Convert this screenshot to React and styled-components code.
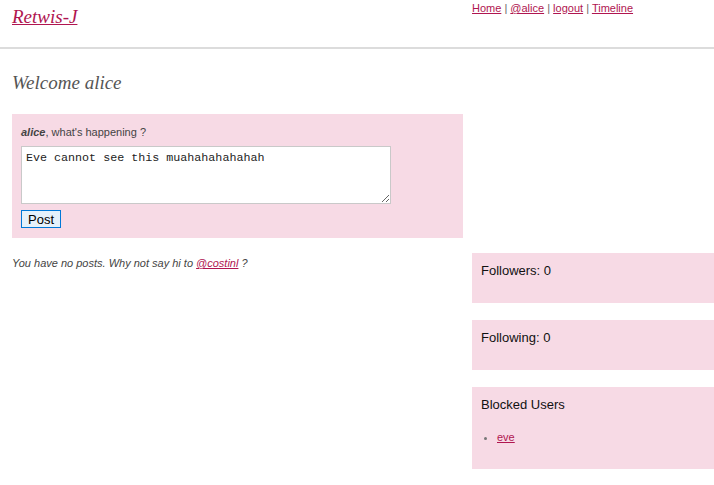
import styled, { createGlobalStyle } from "styled-components";

const GlobalStyle = createGlobalStyle`
  body {
    margin: 0;
    background: #fff;
    font-family: "Liberation Sans", Arial, sans-serif;
    color: #333;
  }
`;

const Header = styled.header`
  display: flex;
  justify-content: space-between;
  height: 47px;
  border-bottom: 2px solid #dcdcdc;
  padding: 0 12px;
`;

const Logo = styled.a`
  font-family: "Liberation Serif", "Times New Roman", serif;
  font-style: italic;
  font-size: 19px;
  color: #b01550;
  text-decoration: underline;
  margin-top: 5px;
  line-height: 24px;
`;

const Nav = styled.nav`
  width: 230px;
  font-size: 11px;
  line-height: 14px;
  color: #666;
  padding-top: 1px;
`;

const NavLink = styled.a`
  color: #b01550;
  text-decoration: underline;
`;

const Welcome = styled.h1`
  font-family: "Liberation Serif", "Times New Roman", serif;
  font-style: italic;
  font-weight: normal;
  font-size: 19px;
  color: #555;
  margin: 22px 12px 19px;
  line-height: 24px;
`;

const Columns = styled.div`
  display: grid;
  grid-template-columns: 451px 242px;
  column-gap: 9px;
  padding-left: 12px;
`;

const Main = styled.div``;

const Side = styled.aside`
  display: flex;
  flex-direction: column;
  gap: 17px;
  padding-top: 139px;
`;

const PostBox = styled.form`
  background: #f7dae5;
  padding: 10px 9px 9px;
  height: 124px;
  box-sizing: border-box;
`;

const Prompt = styled.div`
  font-size: 11px;
  color: #444;
  line-height: 16px;
  margin-bottom: 6px;
  b {
    font-style: italic;
  }
`;

const TextArea = styled.textarea`
  display: block;
  width: 370px;
  height: 58px;
  box-sizing: border-box;
  border: 1px solid #c9c9c9;
  font-family: "Liberation Mono", "Courier New", monospace;
  font-size: 11.7px;
  padding: 4px 4px;
  color: #222;
  resize: vertical;
  margin: 0 0 6px;
`;

const Button = styled.button`
  font-family: "Liberation Sans", Arial, sans-serif;
  font-size: 13px;
  width: 40px;
  height: 18px;
  padding: 0;
  background: #e5f1fb;
  border: 1px solid #0078d7;
  color: #000;
  vertical-align: top;
`;

const Empty = styled.p`
  font-size: 11px;
  font-style: italic;
  color: #444;
  margin: 19px 0 0;
`;

const Panel = styled.div`
  background: #f7dae5;
  min-height: ${(p) => p.$h}px;
  box-sizing: border-box;
  padding: 10px 9px;
`;

const PanelTitle = styled.div`
  font-size: 13px;
  color: #111;
  line-height: 16px;
`;

const List = styled.ul`
  margin: 18px 0 0;
  padding-left: 16px;
  font-size: 11px;
  li::marker {
    color: #777;
  }
`;

export default function App() {
  return (
    <>
      <GlobalStyle />
      <Header>
        <Logo href="#">Retwis-J</Logo>
        <Nav>
          <NavLink href="#">Home</NavLink> | <NavLink href="#">@alice</NavLink> |{" "}
          <NavLink href="#">logout</NavLink> | <NavLink href="#">Timeline</NavLink>
        </Nav>
      </Header>
      <Welcome>Welcome alice</Welcome>
      <Columns>
        <Main>
          <PostBox onSubmit={(e) => e.preventDefault()}>
            <Prompt>
              <b>alice</b>, what's happening ?
            </Prompt>
            <TextArea defaultValue="Eve cannot see this muahahahahahah" />
            <Button type="submit">Post</Button>
          </PostBox>
          <Empty>
            You have no posts. Why not say hi to <NavLink href="#">@costinl</NavLink> ?
          </Empty>
        </Main>
        <Side>
          <Panel $h={50}>
            <PanelTitle>Followers: 0</PanelTitle>
          </Panel>
          <Panel $h={50}>
            <PanelTitle>Following: 0</PanelTitle>
          </Panel>
          <Panel $h={82}>
            <PanelTitle>Blocked Users</PanelTitle>
            <List>
              <li>
                <NavLink href="#">eve</NavLink>
              </li>
            </List>
          </Panel>
        </Side>
      </Columns>
    </>
  );
}
